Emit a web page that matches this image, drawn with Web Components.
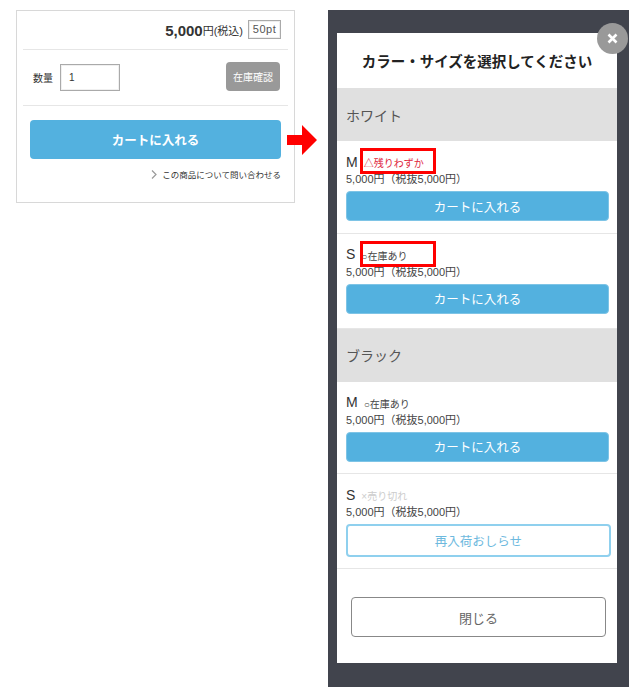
<!DOCTYPE html>
<html lang="ja"><head><meta charset="utf-8">
<style>
html,body{margin:0;background:#fff}
body{width:638px;height:697px;overflow:hidden;font-family:"Liberation Sans","Noto Sans CJK JP",sans-serif;color:#333}
#page{display:flex;align-items:flex-start;padding-top:10px}
</style></head><body>
<div id="page">
<product-card></product-card>
<red-arrow></red-arrow>
<variant-modal>
  <modal-group name="ホワイト">
    <variant-row size="M" stock="△残りわずか" kind="low" marked width="76"></variant-row>
    <variant-row size="S" stock="○在庫あり" marked width="76"></variant-row>
  </modal-group>
  <modal-group name="ブラック">
    <variant-row size="M" stock="○在庫あり"></variant-row>
    <variant-row size="S" stock="×売り切れ" kind="out" action="再入荷おしらせ"></variant-row>
  </modal-group>
</variant-modal>
</div>
<script>
function def(n,html,init){customElements.define(n,class extends HTMLElement{connectedCallback(){if(this.shadowRoot)return;const s=this.attachShadow({mode:'open'});s.innerHTML=html;init&&init(this,s)}})}
def('product-card',`<style>
:host{display:block;box-sizing:border-box;width:279px;height:193px;margin-left:16px;border:1px solid #d8d8d8;padding:0 6px;background:#fff;flex:none}
.price{height:38px;display:flex;justify-content:flex-end;align-items:center;gap:5px;padding:0 7px 0 0;border-bottom:1px solid #e6e6e6;box-sizing:content-box;font-size:11px}
.price b{font-size:15px;letter-spacing:0}.price span{margin-left:-5px}
.pt{box-sizing:border-box;width:33px;height:19px;border:1px solid #aaa;box-shadow:inset 0 0 0 1px #eee;color:#555;font-size:11px;letter-spacing:.5px;display:flex;align-items:center;justify-content:center;margin-top:-2px}
.qty{height:55px;border-bottom:1px solid #e6e6e6;display:flex;align-items:center;padding:0 8px 0 10px;font-size:10px}
.in{box-sizing:border-box;width:60px;height:27px;border:1px solid #aaa;margin-left:7px;padding-left:8px;display:flex;align-items:center;font-size:10px;box-shadow:inset 0 0 0 1px #f0f0f0}
.chk{margin-left:auto;width:54px;height:29px;border-radius:4px;background:#999;color:#fff;font-size:10px;display:flex;align-items:center;justify-content:center;margin-top:-3px}
.cart{margin:14px 7px 0;height:39px;border-radius:4px;background:#53b1df;color:#fff;font-weight:bold;font-size:12.5px;display:flex;align-items:center;justify-content:center}
.ask{margin:9px 7px 0;display:flex;justify-content:flex-end;align-items:center;font-size:8.5px;gap:5px;height:12px}
svg{display:block}
</style>
<div class="price"><b>5,000</b><span>円(税込)</span><div class="pt">50pt</div></div>
<div class="qty"><span>数量</span><div class="in">1</div><div class="chk">在庫確認</div></div>
<div class="cart">カートに入れる</div>
<div class="ask"><svg width="6" height="9" viewBox="0 0 6 9"><path d="M1 .5 5 4.5 1 8.5" fill="none" stroke="#999" stroke-width="1.2"/></svg><span>この商品について問い合わせる</span></div>`);
def('red-arrow',`<style>:host{display:block;width:31px;height:32px;margin:114px 0 0 -8px;flex:none}svg{display:block}</style>
<svg width="31" height="32" viewBox="0 0 31 32"><path d="M0 11H15V1L30 16 15 31V21H0Z" fill="#f00"/></svg>`);
def('variant-modal',`<style>
:host{display:block;box-sizing:border-box;width:301px;height:677px;margin-left:10px;background:#41444d;padding:23px 12px 0 9px;position:relative;flex:none}
.box{background:#fff;height:630px;box-sizing:border-box;width:280px}
h2{margin:0;height:55px;font-size:14.5px;line-height:58px;text-align:center;color:#222;font-weight:bold}
.close{position:absolute;left:269px;top:13px;width:31px;height:31px;border-radius:50%;background:#999;display:flex;align-items:center;justify-content:center}
.foot{padding:28px 11px 0 14px}
.closebtn{height:40px;box-sizing:border-box;border:1px solid #888;border-radius:4px;font-size:13px;color:#666;display:flex;align-items:center;justify-content:center}
</style>
<div class="box"><h2>カラー・サイズを選択してください</h2><slot></slot>
<div class="foot"><div class="closebtn">閉じる</div></div></div>
<div class="close"><svg width="11" height="11" viewBox="0 0 11 11"><path d="M1.5 1.5 9.5 9.5M9.5 1.5 1.5 9.5" stroke="#fff" stroke-width="2.6"/></svg></div>`);
def('modal-group',`<style>:host{display:block}
.h{height:53px;background:#e0e0e0;padding-left:9px;font-size:14px;color:#555;display:flex;align-items:center}
</style><div class="h" id="h"></div><slot></slot>`,(e,s)=>{s.getElementById('h').textContent=e.getAttribute('name')});
def('variant-row',`<style>:host{display:block;box-sizing:border-box;height:92.5px;border-bottom:1px solid #e6e6e6;padding:12px 8px 0 9px}
:host(:last-child){height:95px}
.t{display:flex;align-items:center;height:17px;font-size:14px;color:#333;position:relative}
.st{font-size:10px;margin-left:6px;color:#444;margin-top:2px}
.low{color:#e0263c}.out{color:#ccc}
.mark{position:absolute;left:14px;top:-5px;width:76px;height:26px;box-sizing:border-box;border:3px solid #f00}
.p{font-size:11px;line-height:14px;margin-top:2px;color:#444;height:14px}
.b{margin-top:5px;height:30px;box-sizing:border-box;border:1px solid #7ec4e6;border-radius:4px;background:#53b1df;color:#fff;font-size:12.5px;display:flex;align-items:center;justify-content:center}
.b.alt{background:#fff;color:#6db9de;border:2px solid #8fd0ee;height:33px;margin-right:-2px}
</style><div class="t"><span id="z"></span><span class="st" id="st"></span></div><div class="p">5,000円（税抜5,000円）</div><div class="b" id="b"></div>`,(e,s)=>{
s.getElementById('z').textContent=e.getAttribute('size');const st=s.getElementById('st');st.textContent=e.getAttribute('stock');
const k=e.getAttribute('kind');if(k)st.classList.add(k);
const b=s.getElementById('b');const a=e.getAttribute('action');b.textContent=a||'カートに入れる';if(a)b.classList.add('alt');
if(e.hasAttribute('marked')){const m=document.createElement('div');m.className='mark';s.querySelector('.t').appendChild(m)}});
</script>
</body></html>
